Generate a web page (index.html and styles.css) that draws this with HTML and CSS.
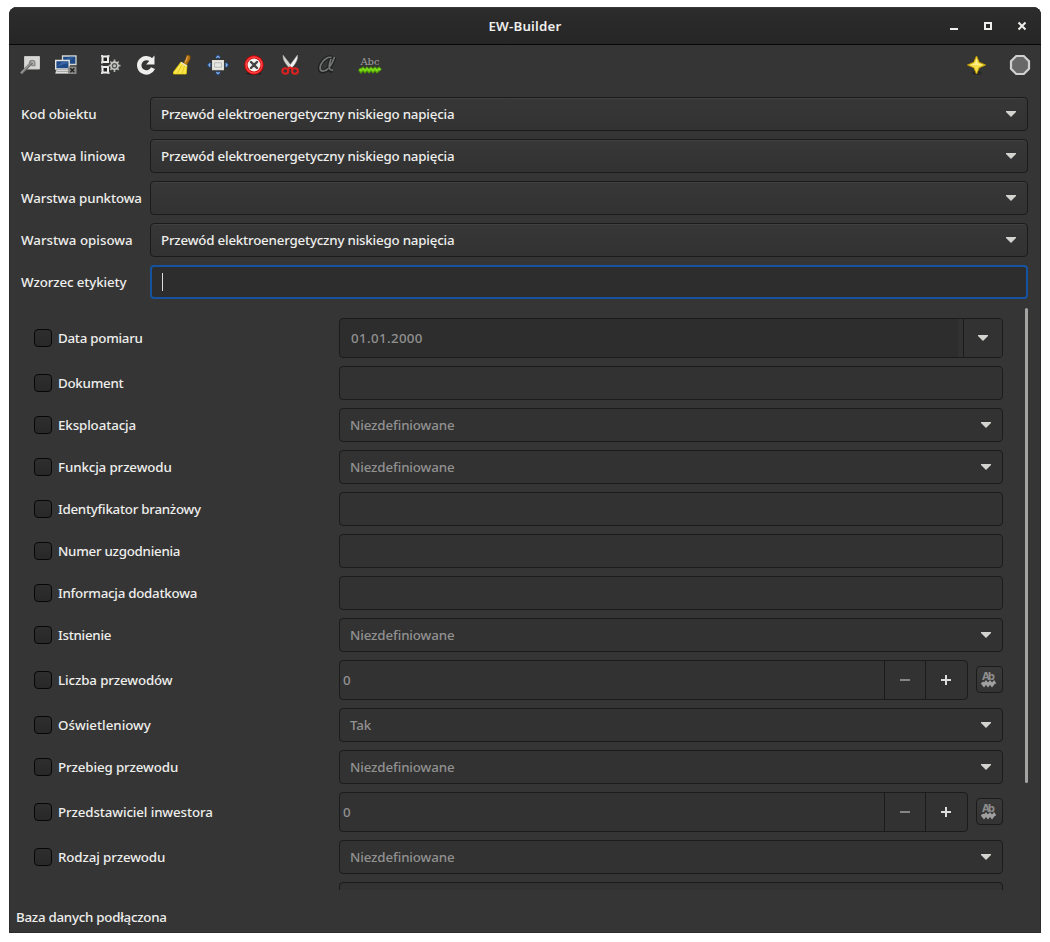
FILE: index.html
```html
<!DOCTYPE html>
<html lang="pl">
<head>
<meta charset="utf-8">
<title>EW-Builder</title>
<link rel="stylesheet" href="styles.css">
</head>
<body>
<div class="window">
  <header class="titlebar">
    <span class="title">EW-Builder</span>
    <div class="controls">
      <svg width="10" height="10" viewBox="0 0 10 10"><path d="M1 8h8" stroke="#eeeeec" stroke-width="2"/></svg>
      <svg width="10" height="10" viewBox="0 0 10 10"><path d="M2 2h6v6h-6z" fill="none" stroke="#eeeeec" stroke-width="2"/></svg>
      <svg width="10" height="10" viewBox="0 0 10 10"><path d="M1.500 1.500l7 7M8.500 1.500l-7 7" stroke="#eeeeec" stroke-width="2"/></svg>
    </div>
  </header>

  <div class="toolbar">
    <svg class="ic" viewBox="0 0 24 24"><path d="M6.500 3.500h15v12.500h-15z" fill="#d7d7d5" stroke="#c4c4c2"/><path d="M11.500 12v-2a2.700 2.700 0 0 1 5.400 0v2.500h-3.500" fill="#b5b5b5" stroke="#888" stroke-width="1.300"/><path d="M3 20.500l11-11" stroke="#666865" stroke-width="3"/><path d="M3 20l11-11" stroke="#999" stroke-width="1.400"/></svg>
    <svg class="ic" viewBox="0 0 24 24"><path d="M8.500 3h13.500v8.500h-13.500z" fill="#204a87" stroke="#d3d7cf" stroke-width="1.300"/><path d="M9.500 8l6-4.500h5.500l-6 5z" fill="#3465a4" opacity=".6"/><path d="M1.700 7.500h13.500v8.500h-13.500z" fill="#204a87" stroke="#e3e5e0" stroke-width="1.400"/><path d="M3 13.500l5-4.500h6v1z" fill="#3e70b0" opacity=".7"/><path d="M2.500 17h12l1 3.500h-14z" fill="#eeeeec" stroke="#aaa" stroke-width=".6"/><path d="M3 18.700h11" stroke="#999"/><path d="M14 13.500h8.500v7.500h-8.500z" fill="#888a85"/><path d="M16.300 15.300l4 4M20.300 15.300l-4 4" stroke="#222" stroke-width="1.500"/></svg>
    <i class="sep"></i>
    <svg class="ic" viewBox="0 0 24 24"><path d="M4.500 3.500h5.500v5.500h-5.500z" fill="#222" stroke="#eeeeec" stroke-width="2"/><path d="M3 2h2v2h-2zM9.500 2h2v2h-2zM3 8.500h2v2h-2z" fill="#d8d8d6"/><path d="M4.500 14h5.500v5.500h-5.500z" fill="#222" stroke="#eeeeec" stroke-width="2"/><path d="M3 12.500h2v2h-2zM3 19h2v2h-2zM9.500 19h2v2h-2z" fill="#d8d8d6"/><g stroke="#b5b7b1" stroke-width="1.700"><path d="M16.500 6.500v12.500M10.500 12.700h12M12.300 8.500l8.400 8.400M20.700 8.500l-8.400 8.400"/></g><circle cx="16.500" cy="12.700" r="3.600" fill="#555753" stroke="#c9ccc5" stroke-width="1.600"/><circle cx="16.500" cy="12.700" r="1.500" fill="#bbb"/></svg>
    <svg class="ic" viewBox="0 0 24 24"><path d="M19 15.200a7.200 7.200 0 1 1-1.500-8" fill="none" stroke="#eeeeec" stroke-width="4.400"/><path d="M20.500 2.500v9h-8.500z" fill="#eeeeec"/></svg>
    <svg class="ic" viewBox="0 0 24 24"><path d="M17 2l3 1v3l-3.500 6-3-1.500 2.500-5z" fill="#b5700f" stroke="#8f5902" stroke-width=".8"/><path d="M17.500 3.500l-2.300 6" stroke="#e9b96e"/><path d="M11 9l6 3.500-.8 8.500H3.500v-2z" fill="#fbe64d" stroke="#edd400" stroke-width=".7"/><path d="M12 12l-4.500 8M14.500 13l-2.500 7.500" stroke="#dcbc14" stroke-width=".8"/><path d="M11 9.500l6 3.500" stroke="#ddd" stroke-width="1.400"/></svg>
    <svg class="ic" viewBox="0 0 24 24"><path d="M6.700 7.700h10.600v8.800h-10.600z" fill="#eee" stroke="#deded6" stroke-width="1.400"/><path d="M8.500 9.700h7v4.600h-7z" fill="#e6e6e0" stroke="#aaa" stroke-width=".8"/><g fill="none" stroke="#24487c" stroke-width="2.800"><path d="M10 5l2-1.800 2 1.800M10 19l2 1.800 2-1.800M4.500 10l-1.700 2 1.700 2M19.500 10l1.700 2-1.700 2"/></g><g fill="none" stroke="#83b0e8" stroke-width="1.300"><path d="M10.300 4.800l1.700-1.500 1.700 1.500M10.300 19.200l1.700 1.500 1.700-1.500M4.300 10.300l-1.400 1.700 1.400 1.700M19.700 10.300l1.400 1.700-1.400 1.700"/></g></svg>
    <svg class="ic" viewBox="0 0 24 24"><ellipse cx="12" cy="20.500" rx="8" ry="1.500" fill="#222"/><circle cx="12" cy="12" r="9.700" fill="#cc0000"/><circle cx="12" cy="12" r="8" fill="none" stroke="#ff4545" stroke-width="1.500"/><circle cx="12" cy="12" r="6.500" fill="#f3f3f1"/><path d="M9 9l6 6M15 9l-6 6" stroke="#444" stroke-width="2.400" stroke-linecap="round"/></svg>
    <svg class="ic" viewBox="0 0 24 24"><path d="M5 2l9 11.500-2.500 1.500C8 11.500 4.500 7 5 2z" fill="#d3d7cf" stroke="#999" stroke-width=".5"/><path d="M19.500 2l-8.500 11.500 2.500 1.500C17 11.500 20 7 19.500 2z" fill="#f3f3f3" stroke="#aaa" stroke-width=".5"/><g fill="none" stroke="#dc2020" stroke-width="2.100"><ellipse cx="7.300" cy="18" rx="2.900" ry="2.800"/><ellipse cx="17" cy="18" rx="2.900" ry="2.800"/><path d="M9.500 16l2.700-1.500 2.500 1.500"/></g></svg>
    <svg class="ic" viewBox="0 0 24 24"><path d="M20.500 4C18.500 10 15 17.500 9.500 18.500c-4.500.5-4.800-4-2.300-8C9.700 6 14.500 3.500 17.500 4.500M17 6c-1.500 4-4 12 1.500 12" fill="none" stroke="#202121" stroke-width="4"/><path d="M20.500 4C18.500 10 15 17.500 9.500 18c-4 .5-4.300-4-2-7.500C9.700 6 14.500 3.500 17.500 4.500M17 6c-1.500 4-4 12 2 11" fill="none" stroke="#747674" stroke-width="1.700"/></svg>
    <i class="sep"></i>
    <svg class="ic" viewBox="0 0 24 24"><text class="abc" x="2.500" y="12" textLength="19">Abc</text><path d="M1.500 16l1.500 2 2-2 2 2 2-2 2 2 2-2 2 2 2-2 2 2 2-2 1.500 1.500" fill="none" stroke="#4e9a06" stroke-width="3.800"/><path d="M1.500 15.700l1.500 2 2-2 2 2 2-2 2 2 2-2 2 2 2-2 2 2 2-2 1.500 1.500" fill="none" stroke="#7cdc1c" stroke-width="1.700"/></svg>
    <span class="spring"></span>
    <svg class="ic" viewBox="0 0 24 24"><ellipse cx="13" cy="20" rx="5" ry="2" fill="#292929"/><path d="M12.500 3l2.700 6.300 6.300 2.700-6.300 2.700-2.700 6.300-2.700-6.300L3.500 12l6.300-2.700z" fill="#f5df4a" stroke="#c4a000"/><path d="M12.500 5.500l1.500 5 5 1.500h-13l5-1.500z" fill="#fff08c"/></svg>
    <i class="sep"></i>
    <svg class="ic" viewBox="0 0 24 24"><path d="M8.200 3h7.600l5.200 5.200v7.600L15.800 21H8.200L3 15.800V8.200z" fill="#686868" stroke="#d0d0d0" stroke-width="2.200"/></svg>
  </div>

  <form class="head">
    <label><span>Kod obiektu</span><b class="box combo raised"><em>Przewód elektroenergetyczny niskiego napięcia</em><i class="arrow"></i></b></label>
    <label><span class="loose">Warstwa liniowa</span><b class="box combo raised"><em>Przewód elektroenergetyczny niskiego napięcia</em><i class="arrow"></i></b></label>
    <label><span>Warstwa punktowa</span><b class="box combo raised"><em></em><i class="arrow"></i></b></label>
    <label><span class="loose">Warstwa opisowa</span><b class="box combo raised"><em>Przewód elektroenergetyczny niskiego napięcia</em><i class="arrow"></i></b></label>
    <label><span>Wzorzec etykiety</span><b class="box focus"><i class="caret"></i></b></label>
  </form>

  <div class="scroll">
    <div class="rows">
      <div class="row"><i class="check"></i><span class="tight">Data pomiaru</span><div class="box tall date"><em>01.01.2000</em><div class="drop"><i class="arrow"></i></div></div></div>
      <div class="row"><i class="check"></i><span class="tight">Dokument</span><div class="box"></div></div>
      <div class="row"><i class="check"></i><span>Eksploatacja</span><div class="box combo"><em>Niezdefiniowane</em><i class="arrow"></i></div></div>
      <div class="row"><i class="check"></i><span>Funkcja przewodu</span><div class="box combo"><em>Niezdefiniowane</em><i class="arrow"></i></div></div>
      <div class="row"><i class="check"></i><span class="tight">Identyfikator branżowy</span><div class="box"></div></div>
      <div class="row"><i class="check"></i><span class="tight">Numer uzgodnienia</span><div class="box"></div></div>
      <div class="row"><i class="check"></i><span class="tight">Informacja dodatkowa</span><div class="box"></div></div>
      <div class="row"><i class="check"></i><span class="tight">Istnienie</span><div class="box combo"><em>Niezdefiniowane</em><i class="arrow"></i></div></div>
      <div class="row"><i class="check"></i><span>Liczba przewodów</span><div class="box tall spin"><em>0</em><div class="step"><i class="minus"></i></div><div class="step last"><i class="plus"></i></div></div><div class="mini"><svg width="16" height="18" viewBox="0 0 16 18"><text class="ab" x="1" y="9" textLength="13">Ab</text><path d="M1 11.500l2 2.500 2-2.500 2 2.500 2-2.500 2 2.500 2-2.500 1 1.500" fill="none" stroke="#a0a0a0" stroke-width="3"/></svg></div></div>
      <div class="row"><i class="check"></i><span class="loose">Oświetleniowy</span><div class="box combo"><em>Tak</em><i class="arrow"></i></div></div>
      <div class="row"><i class="check"></i><span>Przebieg przewodu</span><div class="box combo"><em>Niezdefiniowane</em><i class="arrow"></i></div></div>
      <div class="row"><i class="check"></i><span>Przedstawiciel inwestora</span><div class="box tall spin"><em>0</em><div class="step"><i class="minus"></i></div><div class="step last"><i class="plus"></i></div></div><div class="mini"><svg width="16" height="18" viewBox="0 0 16 18"><text class="ab" x="1" y="9" textLength="13">Ab</text><path d="M1 11.500l2 2.500 2-2.500 2 2.500 2-2.500 2 2.500 2-2.500 1 1.500" fill="none" stroke="#a0a0a0" stroke-width="3"/></svg></div></div>
      <div class="row"><i class="check"></i><span>Rodzaj przewodu</span><div class="box combo"><em>Niezdefiniowane</em><i class="arrow"></i></div></div>
      <div class="row"><span class="blank"></span><div class="box"></div></div>
    </div>
    <div class="thumb"></div>
  </div>

  <footer class="status"><span class="tight">Baza danych podłączona</span></footer>
</div>
</body>
</html>
```
FILE: styles.css
```css
* { box-sizing: border-box; }
body {
  margin: 0;
  padding: 7px 9px 9px;
  height: 942px;
  overflow: hidden;
  background: #fff;
  font: 500 13.33px/20px "Noto Sans", sans-serif;
  letter-spacing: -0.12px;
  color: #eeeeec;
  white-space: nowrap;
}
i, em { font-style: normal; }
b { font-weight: 500; }
svg { display: block; flex: none; }
.tight { letter-spacing: -0.26px; }
.loose { letter-spacing: 0; }

.window {
  height: 926px;
  display: flex;
  flex-direction: column;
  background: #353535;
  border-radius: 8px 8px 0 0;
  box-shadow: inset 0 0 0 1px #2c2c2c;
  overflow: hidden;
}
.titlebar {
  height: 38px;
  flex: none;
  display: grid;
  grid-template-columns: 1fr auto 1fr;
  align-items: center;
  background: linear-gradient(#2c2c2c, #262626);
  border-top: 1px solid #383838;
  border-bottom: 1px solid #070707;
}
.title { grid-column: 2; font-weight: 600; font-size: 13.33px; letter-spacing: 0.2px; }
.controls { display: flex; justify-content: flex-end; gap: 24px; padding-right: 14px; }

.toolbar {
  height: 44px;
  flex: none;
  display: flex;
  align-items: flex-start;
  padding: 8px 9px 0;
  gap: 12px;
}
.ic { width: 24px; height: 24px; }
.sep { width: 0; margin-right: -4px; }
.spring { flex: 1; }
.abc { font: 400 10px "DejaVu Serif", serif; letter-spacing: 0; fill: #a0a2a0; }
.ab { font: 700 10px "DejaVu Sans", sans-serif; letter-spacing: 0; fill: #8d8d8d; }

.head {
  padding: 8px 13px 0 12px;
  margin: 0;
  display: flex;
  flex-direction: column;
  gap: 8px;
}
.head label { display: flex; align-items: center; }
.head label > span { width: 129px; }
.head em { letter-spacing: -0.2px; }

.box {
  flex: 1;
  height: 34px;
  display: flex;
  align-items: center;
  border: 1px solid #1b1b1b;
  border-radius: 4px;
  background: #323232;
}
.combo { padding: 0 11px 0 10px; }
.box em { flex: 1; }
.raised {
  background: linear-gradient(#373737, #323232);
  box-shadow: inset 0 1px #404040;
}
.focus { background: #2d2d2d; border: 2px solid #15539e; padding-left: 10px; }
.caret { width: 1px; height: 18px; background: #ddd; }
.arrow {
  width: 10px;
  height: 6px;
  background: #d3d3cf;
  clip-path: polygon(0 0, 100% 0, 100% 15%, 50% 100%, 0 15%);
}

.scroll {
  height: 582px;
  flex: none;
  margin-top: 9px;
  padding: 0 13px 0 25px;
  display: flex;
  justify-content: space-between;
  overflow: hidden;
}
.rows { width: 969px; padding-top: 10px; display: flex; flex-direction: column; gap: 8px; }
.row { display: flex; align-items: center; flex: none; }
.row > .check + span { width: 287px; padding-left: 6px; }
.row > .blank { width: 305px; }
.row .box em { color: #919190; }
.check {
  width: 18px;
  height: 18px;
  border: 1px solid #070707;
  border-radius: 4px;
  background: linear-gradient(#2e2e2e, #282828);
}
.row .tall { height: 40px; }
.date { background: #2d2d2d; }
.date em { padding-left: 11px; letter-spacing: 0.36px; }
.drop {
  width: 44px;
  height: 38px;
  display: grid;
  place-items: center;
  padding-left: 6px;
  border-radius: 0 3px 3px 0;
  background: linear-gradient(90deg, #323232 5px, #1b1b1b 5px, #1b1b1b 6px, #323232 6px);
}
.spin em { padding-left: 3px; }
.step {
  width: 41px;
  height: 38px;
  border-left: 1px solid #1b1b1b;
  display: grid;
  place-items: center;
}
.last { width: 42px; padding-right: 1px; }
.minus { width: 10px; height: 2px; background: #868686; }
.plus {
  width: 10px;
  height: 10px;
  background: linear-gradient(#ddd, #ddd) center / 10px 2px no-repeat, linear-gradient(#ddd, #ddd) center / 2px 10px no-repeat;
}
.mini {
  width: 27px;
  height: 27px;
  margin: -1px 0 0 8px;
  padding-right: 1px;
  display: grid;
  place-items: center;
  border: 1px solid #1b1b1b;
  border-radius: 4px;
  background: linear-gradient(#3a3a3a, #333);
}
.thumb { width: 3px; height: 475px; border-radius: 2px; background: #a4a4a3; }
.status { padding: 17px 7px 0; }
```
